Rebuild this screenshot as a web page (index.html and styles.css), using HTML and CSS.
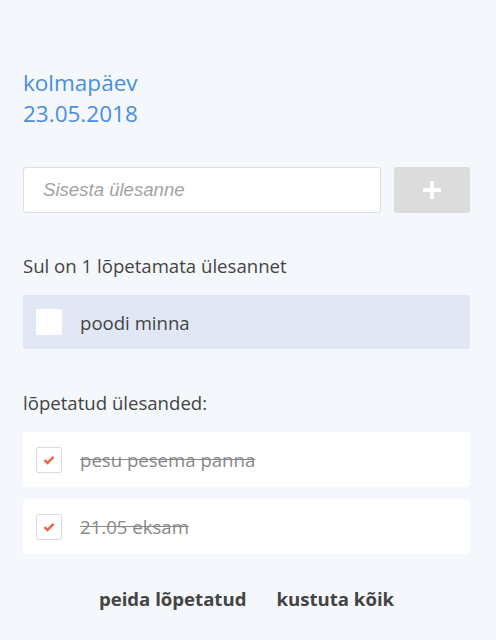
FILE: index.html
```html
<!DOCTYPE html>
<html lang="et">
<head>
<meta charset="utf-8">
<title>Ülesanded</title>
<link rel="stylesheet" href="styles.css">
</head>
<body>
<main class="app">
  <header class="date">
    <div class="day">kolmapäev</div>
    <div class="full">23.05.2018</div>
  </header>
  <form class="add">
    <input class="add-input" type="text" placeholder="Sisesta ülesanne">
    <button class="add-btn" type="button" aria-label="Lisa">
      <svg width="20" height="20" viewBox="0 0 20 20"><path d="M10 1v18M1 10h18" stroke="#fff" stroke-width="4"/></svg>
    </button>
  </form>
  <p class="label count">Sul on 1 lõpetamata ülesannet</p>
  <ul class="list">
    <li class="item item-open"><span class="box"></span><span class="text">poodi minna</span></li>
  </ul>
  <p class="label done-label">lõpetatud ülesanded:</p>
  <ul class="list list-done">
    <li class="item item-done"><span class="box box-checked"><svg width="12" height="10" viewBox="0 0 12 10"><path d="M1.5 5.2l3 2.8 6-6.2" fill="none" stroke="#e8634a" stroke-width="2.4"/></svg></span><span class="text">pesu pesema panna</span></li>
    <li class="item item-done"><span class="box box-checked"><svg width="12" height="10" viewBox="0 0 12 10"><path d="M1.5 5.2l3 2.8 6-6.2" fill="none" stroke="#e8634a" stroke-width="2.4"/></svg></span><span class="text">21.05 eksam</span></li>
  </ul>
  <div class="actions">
    <button class="action" type="button">peida lõpetatud</button>
    <button class="action" type="button">kustuta kõik</button>
  </div>
</main>
</body>
</html>
```

FILE: styles.css
```css
html, body {
  margin: 0;
  padding: 0;
  background: #f4f7fb;
}
body {
  font-family: "Open Sans", "Noto Sans", sans-serif;
  color: #444;
}
.app {
  padding: 67px 26px 0 23px;
}
.date {
  color: #4a8ee0;
  font-size: 22.5px;
  line-height: 31px;
}
.add {
  display: flex;
  gap: 13px;
  margin-top: 38px;
}
.add-input {
  flex: 1;
  height: 46px;
  box-sizing: border-box;
  border: 1px solid #dcdee2;
  border-radius: 3px;
  background: #fff;
  padding: 0 19px;
  font-family: "Liberation Sans", Arial, sans-serif;
  font-size: 18.6px;
  color: #444;
  margin: 0;
}
.add-input::placeholder {
  color: #a3a3a3;
  font-style: italic;
}
.add-btn {
  width: 76px;
  height: 46px;
  border: none;
  border-radius: 3px;
  background: #dcdcdc;
  display: flex;
  align-items: center;
  justify-content: center;
  padding: 0;
}
.label {
  margin: 0;
  font-size: 18.6px;
  line-height: 24px;
}
.count {
  margin-top: 41px;
}
.list {
  list-style: none;
  margin: 17px 0 0;
  padding: 0;
  display: flex;
  flex-direction: column;
  gap: 12px;
}
.item {
  display: flex;
  align-items: center;
  height: 55px;
  border-radius: 3px;
  padding-left: 13px;
  font-size: 18.6px;
}
.item-open {
  background: #e1e7f4;
  height: 54px;
}
.item-done {
  background: #fff;
}
.box {
  width: 26px;
  height: 26px;
  box-sizing: border-box;
  background: #fff;
  border-radius: 2px;
  margin-right: 18px;
  flex: none;
  display: flex;
  align-items: center;
  justify-content: center;
}
.box-checked {
  border: 1px solid #d8dde4;
}
.item-done .text {
  color: #888;
  text-decoration: line-through;
}
.done-label {
  margin-top: 42px;
}
.list-done {
  margin-top: 17px;
}
.actions {
  display: flex;
  justify-content: center;
  gap: 30px;
  margin-top: 32px;
}
.action {
  border: none;
  background: none;
  padding: 0;
  font-family: "Open Sans", "Noto Sans", sans-serif;
  font-weight: 700;
  font-size: 18.6px;
  color: #444;
}
```
